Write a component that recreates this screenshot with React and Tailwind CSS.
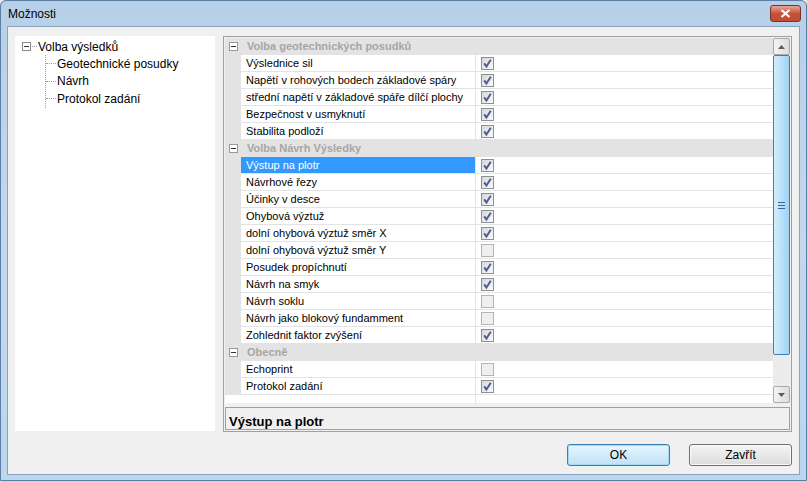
import React from 'react';

const sections = [
  {
    title: 'Volba geotechnických posudků',
    rows: [
      ['Výslednice sil', true],
      ['Napětí v rohových bodech základové spáry', true],
      ['střední napětí v základové spáře dílčí plochy', true],
      ['Bezpečnost v usmyknutí', true],
      ['Stabilita podloží', true],
    ],
  },
  {
    title: 'Volba Návrh Výsledky',
    rows: [
      ['Výstup na plotr', true, true],
      ['Návrhové řezy', true],
      ['Účinky v desce', true],
      ['Ohybová výztuž', true],
      ['dolní ohybová výztuž směr X', true],
      ['dolní ohybová výztuž směr Y', false],
      ['Posudek propíchnutí', true],
      ['Návrh na smyk', true],
      ['Návrh soklu', false],
      ['Návrh jako blokový fundamment', false],
      ['Zohlednit faktor zvýšení', true],
    ],
  },
  {
    title: 'Obecně',
    rows: [
      ['Echoprint', false],
      ['Protokol zadání', true],
    ],
  },
];

const Check = ({ on }) => (
  <svg width="13" height="13" viewBox="0 0 13 13">
    <defs>
      <linearGradient id="cbg" x1="0" y1="0" x2="1" y2="1">
        <stop offset="0" stopColor="#d6d6d6" />
        <stop offset="1" stopColor="#fbfbfb" />
      </linearGradient>
    </defs>
    <rect
      x="0.5"
      y="0.5"
      width="12"
      height="12"
      fill={on ? 'url(#cbg)' : '#efefef'}
      stroke={on ? '#8e8f8f' : '#b4b4b4'}
    />
    {on && (
      <path
        d="M3.2 6.4 L5.4 9.6 L9.8 2.8"
        stroke="#4a5a94"
        strokeWidth="1.9"
        fill="none"
      />
    )}
  </svg>
);

// small boxed minus used by the tree and grid categories
const Minus = ({ color = '#8b8b8b' }) => (
  <svg width="9" height="9" viewBox="0 0 9 9">
    <rect x="0.5" y="0.5" width="8" height="8" fill="#fff" stroke={color} />
    <path d="M2 4.5 H7" stroke="#333" />
  </svg>
);

const ScrollBtn = ({ up }) => (
  <div className="flex h-[17px] items-center justify-center rounded-[2px] border border-[#a9a9a9] bg-gradient-to-r from-[#f4f4f4] to-[#dcdcdc]">
    <svg width="7" height="4" viewBox="0 0 7 4">
      <path d={up ? 'M0 4 L3.5 0 L7 4 Z' : 'M0 0 L3.5 4 L7 0 Z'} fill="#5c5c5c" />
    </svg>
  </div>
);

export default function App() {
  return (
    <div className="h-[481px] w-[807px] overflow-hidden bg-[#e8e8e8] font-['Liberation_Sans',Arial,sans-serif]">
      <div className="flex h-full flex-col rounded-t-[6px] border border-[#5b7ea3] bg-gradient-to-b from-[#b7cfe8] via-[#c3d8ee] to-[#bcd6ef] px-[6px] pb-[5px]">
        {/* title bar */}
        <div className="flex h-[25px] items-center justify-between">
          <span className="pl-[1px] text-[12px] text-black">Možnosti</span>
          <div className="mr-[-1px] flex h-[17px] w-[31px] items-center justify-center rounded-[3px] border border-[#7a3328] bg-gradient-to-b from-[#e8a696] via-[#c7523c] to-[#c14a35]">
            <svg width="11" height="9" viewBox="0 0 11 9">
              <path d="M1.5 1 L9.5 8 M9.5 1 L1.5 8" stroke="#fff" strokeWidth="2.2" />
            </svg>
          </div>
        </div>

        {/* client area */}
        <div className="flex flex-1 flex-col border border-[#8aa3bd] bg-[#f0f0f0] px-[7px] pt-[9px]">
          <div className="flex h-[396px] gap-[8px]">
            {/* tree */}
            <div className="h-[395px] w-[201px] bg-white pt-[2px] text-[12px] text-black">
              <div className="flex h-[17px] items-center pl-[7px]">
                <Minus />
                <span className="ml-[1px] w-[5px] border-t border-dotted border-[#a0a0a0]" />
                <span className="ml-[1px]">Volba výsledků</span>
              </div>
              <div className="ml-[30px] border-l border-dotted border-[#a0a0a0]">
                {['Geotechnické posudky', 'Návrh', 'Protokol zadání'].map((t) => (
                  <div key={t} className="flex h-[17.5px] items-center">
                    <span className="w-[10px] border-t border-dotted border-[#a0a0a0]" />
                    <span className="ml-[1px]">{t}</span>
                  </div>
                ))}
              </div>
            </div>

            {/* property grid panel */}
            <div className="flex w-[569px] flex-col border border-[#a0a0a0] p-[1px]">
              <div className="flex h-[365px] bg-white">
                <div className="flex w-[548px] flex-col text-[11px]">
                  {sections.map((s) => (
                    <React.Fragment key={s.title}>
                      <div className="flex h-[17px] items-center bg-[#e3e3e3]">
                        <div className="flex w-[16px] justify-center">
                          <Minus color="#9a9a9a" />
                        </div>
                        <span className="pl-[6px] font-bold text-[#a6a6a6]">{s.title}</span>
                      </div>
                      {s.rows.map(([name, on, sel]) => (
                        <div key={name} className="flex h-[17px]">
                          <div className="w-[16px] bg-[#e3e3e3]" />
                          <div
                            className={`flex w-[235px] items-center border-r border-b border-[#e3e3e3] pl-[5px] ${
                              sel ? 'bg-[#3399ff] text-white' : 'text-black'
                            }`}
                          >
                            {name}
                          </div>
                          <div className="flex flex-1 items-center border-b border-[#e3e3e3] pl-[5px]">
                            <Check on={on} />
                          </div>
                        </div>
                      ))}
                    </React.Fragment>
                  ))}
                  <div className="flex flex-1">
                    <div className="w-[16px]" />
                    <div className="w-[235px] border-r border-[#e3e3e3]" />
                  </div>
                </div>

                {/* scrollbar */}
                <div className="flex w-[17px] flex-col bg-[#ececec]">
                  <ScrollBtn up />
                  <div className="flex h-[300px] flex-col items-center justify-center gap-[2px] rounded-[2px] border border-[#3c7fb1] bg-gradient-to-r from-[#d4eefc] to-[#9fd2f3]">
                    <div className="h-[1px] w-[7px] bg-[#2f6a98]" />
                    <div className="h-[1px] w-[7px] bg-[#2f6a98]" />
                    <div className="h-[1px] w-[7px] bg-[#2f6a98]" />
                  </div>
                  <div className="flex-1" />
                  <ScrollBtn />
                </div>
              </div>

              <div className="mt-[4px] h-[23px] overflow-hidden border border-[#a0a0a0] px-[3px] pt-[5px] text-[13px] font-bold leading-[17px] text-black">
                Výstup na plotr
              </div>
            </div>
          </div>

          {/* buttons */}
          <div className="mt-[12px] flex justify-end gap-[19px] text-[12px] text-black">
            <button className="h-[22px] w-[103px] rounded-[3px] border border-[#3c7fb1] bg-gradient-to-b from-[#e8f6fd] to-[#bfe2f6] shadow-[inset_0_0_0_1px_#9fdaf8]">
              OK
            </button>
            <button className="h-[22px] w-[103px] rounded-[3px] border border-[#707070] bg-gradient-to-b from-[#f4f4f4] to-[#dcdcdc] shadow-[inset_0_0_0_1px_#fafafa]">
              Zavřít
            </button>
          </div>
        </div>
      </div>
    </div>
  );
}
